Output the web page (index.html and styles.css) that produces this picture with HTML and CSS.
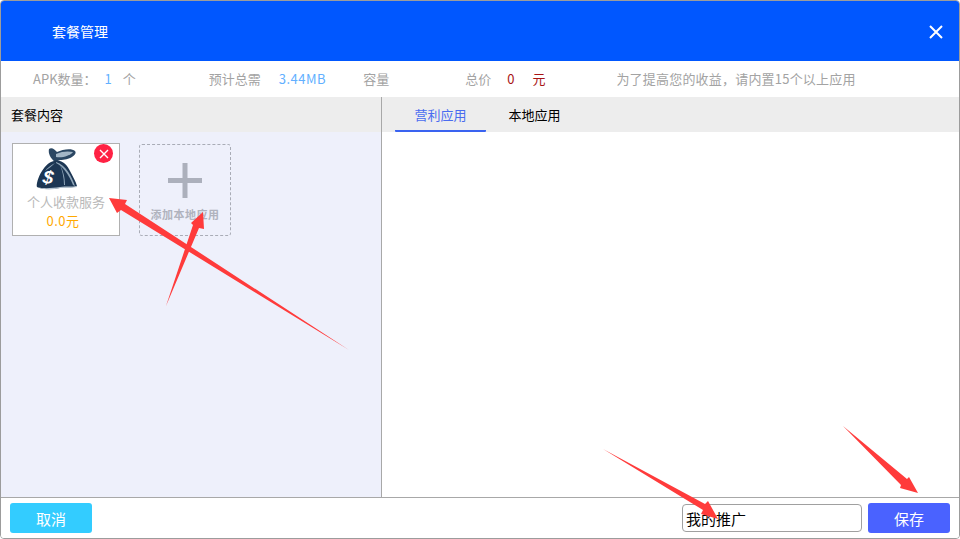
FILE: index.html
```html
<!DOCTYPE html>
<html lang="zh-CN">
<head>
<meta charset="utf-8">
<title>套餐管理</title>
<link rel="stylesheet" href="styles.css">
</head>
<body>
<div class="window">
  <header class="head">
    <h1 class="head-title">套餐管理</h1>
    <svg class="close" width="14" height="14" viewBox="0 0 14 14"><path d="M1 1l12 12M13 1L1 13" stroke="#fff" stroke-width="2" fill="none"/></svg>
  </header>
  <div class="stats">
    <span class="s-apk">APK数量：</span><span class="blue s-one">1</span><span class="s-ge">个</span>
    <span class="s-need">预计总需</span><span class="blue s-mb">3.44MB</span>
    <span class="s-cap">容量</span>
    <span class="s-total">总价</span><span class="red s-zero">0</span><span class="red s-yuan">元</span>
    <span class="s-tip">为了提高您的收益，请内置15个以上应用</span>
  </div>
  <main class="body">
    <section class="left">
      <div class="left-head">套餐内容</div>
      <div class="left-body">
        <div class="card">
          <svg class="bag" width="44" height="44" viewBox="0 0 44 44">
            <path d="M13 2C16 0 19 3 21 5 27 2 36 1 39 4 42 8 33 13 24 13L19 15C14 11 12 6 13 2z" fill="#2b4763"/>
            <path d="M20 7C26 4 33 4 37 5 34 9 26 11 20 10z" fill="#a3b6c6"/>
            <path d="M18 14C26 12 31 18 34 24 37 30 40 35 41 39 38 41 30 40 24 41 16 42 7 43 1 40 0 38 2 30 6 24 9 19 13 15 18 14z" fill="#1c3653"/>
            <path d="M20 16C27 19 33 28 37 38L39 39C36 30 30 18 20 15zM19 16C15 18 11 21 9 24 12 22 16 19 19 16zM24 18C26 23 28 30 28 38L29 38C29 30 27 23 24 18z" fill="#8fa5b8"/>
            <path d="M1 40C8 42 16 41 24 40 30 39 37 40 41 39L41 40C37 41 30 41 24 41 16 43 7 43 1 40z" fill="#b4c2ce"/>
            <text class="bag-s" x="7" y="37" transform="rotate(8 13 30)">$</text>
          </svg>
          <span class="remove"><svg width="10" height="10" viewBox="0 0 10 10"><path d="M1 1l8 8M9 1L1 9" stroke="#fff" stroke-width="1.4" fill="none"/></svg></span>
          <div class="card-name">个人收款服务</div>
          <div class="card-price">0.0元</div>
        </div>
        <div class="add">
          <svg class="plus" width="34" height="35" viewBox="0 0 34 35"><path d="M17 0v35M0 17.5h34" stroke="#acb0bc" stroke-width="5" fill="none"/></svg>
          <div class="add-text">添加本地应用</div>
        </div>
      </div>
    </section>
    <section class="right">
      <nav class="tabs">
        <span class="tab tab-active">营利应用</span>
        <span class="tab">本地应用</span>
      </nav>
      <div class="right-body"></div>
    </section>
  </main>
  <footer class="foot">
    <button class="btn btn-cancel" type="button">取消</button>
    <input class="name" type="text" value="我的推广">
    <button class="btn btn-save" type="button">保存</button>
  </footer>
</div>
<svg class="arrows" width="960" height="539" viewBox="0 0 960 539">
  <path d="M349 350L125 204 127 200 109 198 117 213 121 210z" fill="#ff3b3b"/>
  <path d="M166 306L193 225 191 223 203 212 204 229 199 228z" fill="#ff3b3b"/>
  <path d="M603 449L705 504 708 501 718 519 701 514 703 510z" fill="#ff3b3b"/>
  <path d="M843 426L907 479 909 477 918 493 900 488 901 485z" fill="#ff3b3b"/>
</svg>
</body>
</html>
```
FILE: styles.css
```css
* { box-sizing: border-box; }
html, body { margin: 0; padding: 0; }
body {
  width: 960px; height: 539px; overflow: hidden; background: #fff;
  font-family: "Noto Sans CJK SC", "Liberation Sans", sans-serif;
  font-size: 13px; position: relative;
}
.window {
  width: 960px; height: 539px; border: 1px solid #9c9c9c; border-radius: 4px;
  overflow: hidden; display: flex; flex-direction: column; background: #fff;
}
.head {
  height: 60px; flex: none; background: #0057ff; color: #fff;
  display: flex; align-items: center; justify-content: space-between;
  padding: 0 16px 0 51px;
}
.head-title { margin: 0; font-size: 14px; font-weight: 400; }
.close { display: block; margin-top: 2px; }
.stats {
  height: 36px; flex: none; display: flex; align-items: center; color: #a3a3a3;
  padding: 0 0 2px 32px; white-space: nowrap;
}
.blue { color: #62b0ff; }
.red { color: #a81414; }
.s-one { margin-left: 8px; }
.s-ge { margin-left: 11px; }
.s-need { margin-left: 73px; }
.s-mb { margin-left: 18px; letter-spacing: .5px; }
.s-cap { margin-left: 37px; }
.s-total { margin-left: 76px; }
.s-zero { margin-left: 16px; }
.s-yuan { margin-left: 18px; }
.s-tip { margin-left: 71px; letter-spacing: .2px; }
.body { flex: 1; display: flex; min-height: 0; }
.left { width: 381px; flex: none; display: flex; flex-direction: column; border-right: 1px solid #a8a8a8; }
.left-head {
  height: 35px; flex: none; background: #ededed; color: #000; padding: 0 0 0 10px;
  line-height: 35px;
}
.left-body { flex: 1; background: #eef0fb; display: flex; align-items: flex-start; padding: 11px 0 0 11px; gap: 19px; }
.card {
  width: 108px; height: 93px; background: #fff; border: 1px solid #b0b0b0; position: relative;
  text-align: center; flex: none;
}
.bag { display: block; position: absolute; left: 23px; top: 3px; }
.bag-s { font-family: "Liberation Sans", sans-serif; font-weight: 700; font-style: italic; font-size: 19px; fill: #fff; }
.remove {
  position: absolute; right: 6px; top: 0; width: 19px; height: 19px; border-radius: 50%;
  background: #ff2244; display: flex; align-items: center; justify-content: center;
}
.card-name { margin-top: 49px; color: #b9b9b9; line-height: 18px; }
.card-price { color: #ffa800; font-size: 13px; letter-spacing: .5px; line-height: 20px; padding-right: 6px; }
.add {
  width: 92px; height: 92px; margin-top: 1px; border: 1px dashed #a9acb6; border-radius: 3px;
  flex: none; display: flex; flex-direction: column; align-items: center;
}
.plus { display: block; margin-top: 18px; }
.add-text { color: #b0b3be; font-size: 11px; letter-spacing: .5px; font-weight: 700; line-height: 14px; margin-top: 9px; }
.right { flex: 1; display: flex; flex-direction: column; }
.tabs { height: 35px; flex: none; background: #ededed; display: flex; padding-left: 13px; }
.tab { width: 91px; height: 35px; text-align: center; line-height: 35px; color: #000; margin-right: 3px; }
.tab-active { color: #4a6cf0; border-bottom: 2px solid #3a63f0; border-radius: 1px; }
.right-body { flex: 1; background: #fff; }
.foot {
  height: 41px; flex: none; border-top: 1px solid #a8a8a8; background: #fff;
  display: flex; align-items: center; padding: 0 9px 0 9px;
}
.btn {
  height: 30px; border: 0; border-radius: 3px; color: #fff; padding: 0;
  font-family: inherit; font-size: 15px; width: 82px;
}
.btn-cancel { background: #33ccff; }
.btn-save { background: #4a62ff; margin-left: 6px; }
.name {
  margin-left: auto; width: 180px; height: 28px; border: 1px solid #a0a0a0; border-radius: 4px;
  padding: 0 3px; font-family: inherit; font-size: 15px; color: #000; background: #fff; outline: 0;
}
.arrows { position: absolute; left: 0; top: 0; pointer-events: none; }
```
